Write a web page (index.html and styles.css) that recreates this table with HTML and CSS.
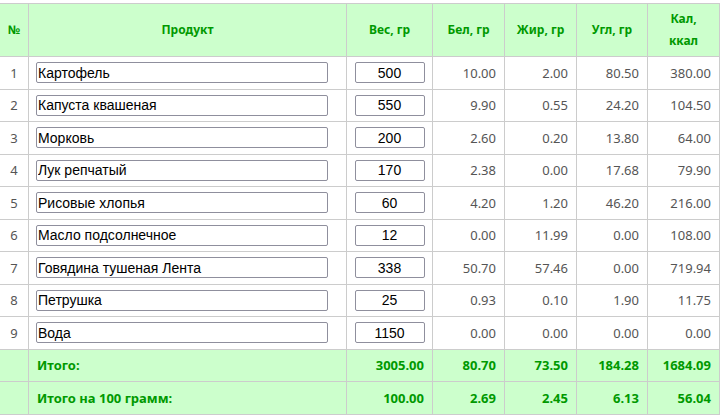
FILE: index.html
```html
<!DOCTYPE html>
<html lang="ru">
<head>
<meta charset="utf-8">
<link rel="stylesheet" href="styles.css">
</head>
<body>
<table class="calc">
  <colgroup>
    <col class="c-num"><col class="c-prod"><col class="c-w"><col class="c-n"><col class="c-n"><col class="c-n2"><col class="c-n">
  </colgroup>
  <thead>
    <tr class="head">
      <th>№</th><th>Продукт</th><th>Вес, гр</th><th>Бел, гр</th><th>Жир, гр</th><th>Угл, гр</th><th>Кал,<br>ккал</th>
    </tr>
  </thead>
  <tbody>
    <tr class="row"><td class="num">1</td><td class="prod"><input class="in-prod" value="Картофель"></td><td class="w"><input class="in-w" value="500"></td><td class="val">10.00</td><td class="val">2.00</td><td class="val">80.50</td><td class="val">380.00</td></tr>
    <tr class="row"><td class="num">2</td><td class="prod"><input class="in-prod" value="Капуста квашеная"></td><td class="w"><input class="in-w" value="550"></td><td class="val">9.90</td><td class="val">0.55</td><td class="val">24.20</td><td class="val">104.50</td></tr>
    <tr class="row"><td class="num">3</td><td class="prod"><input class="in-prod" value="Морковь"></td><td class="w"><input class="in-w" value="200"></td><td class="val">2.60</td><td class="val">0.20</td><td class="val">13.80</td><td class="val">64.00</td></tr>
    <tr class="row"><td class="num">4</td><td class="prod"><input class="in-prod" value="Лук репчатый"></td><td class="w"><input class="in-w" value="170"></td><td class="val">2.38</td><td class="val">0.00</td><td class="val">17.68</td><td class="val">79.90</td></tr>
    <tr class="row"><td class="num">5</td><td class="prod"><input class="in-prod" value="Рисовые хлопья"></td><td class="w"><input class="in-w" value="60"></td><td class="val">4.20</td><td class="val">1.20</td><td class="val">46.20</td><td class="val">216.00</td></tr>
    <tr class="row"><td class="num">6</td><td class="prod"><input class="in-prod" value="Масло подсолнечное"></td><td class="w"><input class="in-w" value="12"></td><td class="val">0.00</td><td class="val">11.99</td><td class="val">0.00</td><td class="val">108.00</td></tr>
    <tr class="row"><td class="num">7</td><td class="prod"><input class="in-prod" value="Говядина тушеная Лента"></td><td class="w"><input class="in-w" value="338"></td><td class="val">50.70</td><td class="val">57.46</td><td class="val">0.00</td><td class="val">719.94</td></tr>
    <tr class="row"><td class="num">8</td><td class="prod"><input class="in-prod" value="Петрушка"></td><td class="w"><input class="in-w" value="25"></td><td class="val">0.93</td><td class="val">0.10</td><td class="val">1.90</td><td class="val">11.75</td></tr>
    <tr class="row"><td class="num">9</td><td class="prod"><input class="in-prod" value="Вода"></td><td class="w"><input class="in-w" value="1150"></td><td class="val">0.00</td><td class="val">0.00</td><td class="val">0.00</td><td class="val">0.00</td></tr>
  </tbody>
  <tfoot>
    <tr class="total"><td></td><td class="label">Итого:</td><td class="val">3005.00</td><td class="val">80.70</td><td class="val">73.50</td><td class="val">184.28</td><td class="val">1684.09</td></tr>
    <tr class="total"><td></td><td class="label">Итого на 100 грамм:</td><td class="val">100.00</td><td class="val">2.69</td><td class="val">2.45</td><td class="val">6.13</td><td class="val">56.04</td></tr>
  </tfoot>
</table>
</body>
</html>
```

FILE: styles.css
```css
html, body {
  margin: 0;
  padding: 0;
  background: #ffffff;
}

body {
  padding-top: 3px;
  font-family: "Noto Sans", "Open Sans", sans-serif;
  font-size: 13px;
  color: #555555;
}

.calc {
  border-collapse: collapse;
  table-layout: fixed;
  width: 720px;
  margin-left: -1px;
}

.c-num { width: 29px; }
.c-prod { width: 318px; }
.c-w { width: 86px; }
.c-n { width: 72px; }
.c-n2 { width: 71px; }

.calc th,
.calc td {
  border: 1px solid #cccccc;
  padding: 0 8px;
}

.head th {
  background: #ccffcc;
  color: #009900;
  font-weight: bold;
  font-size: 12px;
  line-height: 22px;
  height: 52px;
  padding: 0 4px;
  text-align: center;
  vertical-align: middle;
}

.row td {
  height: 31.5px;
  vertical-align: middle;
}

.num {
  text-align: center;
  padding: 0 !important;
}

.calc td.prod {
  padding: 0 0 0 7px;
}

.calc td.w {
  padding: 0;
  text-align: center;
}

.val {
  text-align: right;
}

input {
  font-family: "Liberation Sans", Arial, sans-serif;
  font-size: 14px;
  color: #000000;
  height: 21px;
  box-sizing: border-box;
  border: 1px solid #8f8f9d;
  border-radius: 2px;
  background: #ffffff;
  margin: 0;
  display: block;
}

.in-prod {
  width: 292px;
  padding: 0 1px;
}

.in-w {
  width: 70px;
  margin: 0 auto;
  text-align: center;
  padding: 0 2px;
}

.total td {
  background: #ccffcc;
  color: #009900;
  font-weight: bold;
  height: 31.5px;
}
```
